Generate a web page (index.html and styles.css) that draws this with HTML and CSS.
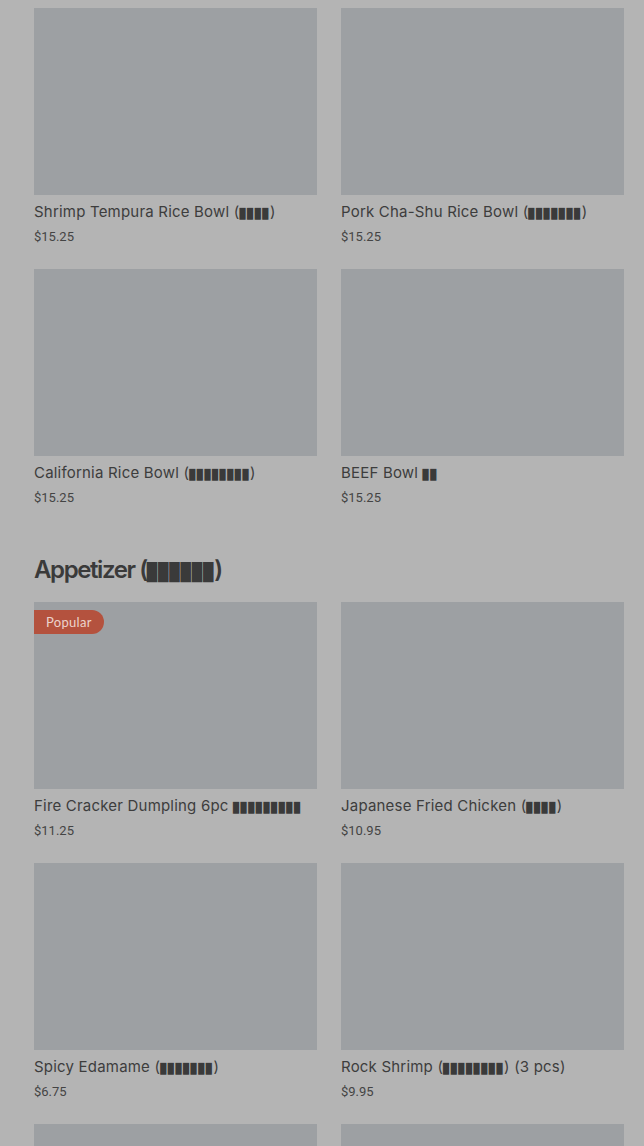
FILE: index.html
```html
<!DOCTYPE html>
<html lang="en">
<head>
  <meta charset="UTF-8" />
  <meta name="viewport" content="width=device-width, initial-scale=1" />
  <title>Menu</title>
  <link rel="stylesheet" href="styles.css">
</head>
<body>

<main class="menu">
  <section class="category">
    <div class="grid">
      <div class="item">
        <div class="photo"></div>
        <div class="name">Shrimp Tempura Rice Bowl (<span class="tofu">████</span>)</div>
        <div class="price">$15.25</div>
      </div>
      <div class="item">
        <div class="photo"></div>
        <div class="name">Pork Cha-Shu Rice Bowl (<span class="tofu">███████</span>)</div>
        <div class="price">$15.25</div>
      </div>
      <div class="item">
        <div class="photo"></div>
        <div class="name">California Rice Bowl (<span class="tofu">████████</span>)</div>
        <div class="price">$15.25</div>
      </div>
      <div class="item">
        <div class="photo"></div>
        <div class="name">BEEF Bowl <span class="tofu">██</span></div>
        <div class="price">$15.25</div>
      </div>
    </div>
  </section>

  <section class="category">
    <h2>Appetizer (<span class="tofu">██████</span>)</h2>
    <div class="grid">
      <div class="item">
        <div class="photo">
          <span class="badge">Popular</span>
        </div>
        <div class="name">Fire Cracker Dumpling 6pc <span class="tofu">█████████</span></div>
        <div class="price">$11.25</div>
      </div>
      <div class="item">
        <div class="photo"></div>
        <div class="name">Japanese Fried Chicken (<span class="tofu">████</span>)</div>
        <div class="price">$10.95</div>
      </div>
      <div class="item">
        <div class="photo"></div>
        <div class="name">Spicy Edamame (<span class="tofu">███████</span>)</div>
        <div class="price">$6.75</div>
      </div>
      <div class="item">
        <div class="photo"></div>
        <div class="name">Rock Shrimp (<span class="tofu">████████</span>) (3 pcs)</div>
        <div class="price">$9.95</div>
      </div>
      <div class="item">
        <div class="photo"></div>
      </div>
      <div class="item">
        <div class="photo"></div>
      </div>
    </div>
  </section>
</main>

</body>
</html>
```

FILE: styles.css
```css
body {
  margin: 0;
  background: #b4b4b4;
  font-family: Roboto, 'Liberation Sans', sans-serif;
  color: #3d3d3d;
  height: 1146px;
  overflow: hidden;
}

.menu {
  padding: 8px 20px 0 34px;
}

.category + .category {
  margin-top: 46px;
}

.category h2 {
  margin: 0 0 16px;
  font-family: Inter, sans-serif;
  font-weight: 600;
  font-size: 24px;
  line-height: 32px;
  letter-spacing: -1.4px;
  color: #3a3a3a;
}

.grid {
  display: grid;
  grid-template-columns: 283px 283px;
  column-gap: 24px;
  row-gap: 22px;
}

.photo {
  position: relative;
  height: 187px;
  background: #9da0a3;
}

.badge {
  position: absolute;
  top: 8px;
  left: 0;
  padding: 0 12px;
  height: 24px;
  line-height: 24px;
  border-radius: 0 12px 12px 0;
  background: #b4523e;
  color: #ecd2cc;
  font-family: Lato, sans-serif;
  font-size: 13px;
  letter-spacing: 0.3px;
}

.name {
  margin-top: 7px;
  font-family: Inter, sans-serif;
  font-size: 15px;
  line-height: 20px;
  letter-spacing: 0.2px;
  white-space: nowrap;
}

.price {
  margin-top: 5px;
  font-size: 13px;
  line-height: 20px;
  color: #444;
}

.tofu {
  font-family: 'DejaVu Sans Mono', monospace;
  font-size: 10px;
  line-height: 1;
  letter-spacing: 1.6px;
  color: #3a3a3a;
}

h2 .tofu {
  font-size: 17px;
  letter-spacing: 1px;
}
```
